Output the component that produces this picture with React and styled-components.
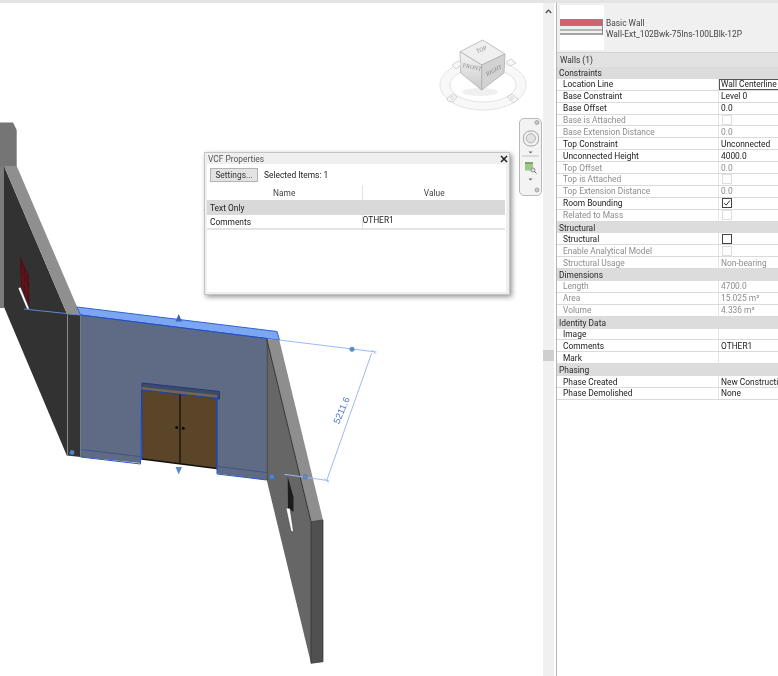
import React from "react";
import styled, { createGlobalStyle } from "styled-components";

const Global = createGlobalStyle`
  html, body { margin: 0; padding: 0; background: #fff; }
  #root { width: 778px; height: 676px; overflow: hidden; }
  * { box-sizing: border-box; }
`;

const Page = styled.div`
  width: 778px; height: 676px; display: flex; flex-direction: column; overflow: hidden;
  font-family: Roboto, "Noto Sans", "Liberation Sans", sans-serif; font-size: 8.4px; color: #222;
  filter: blur(0.3px);
`;
const TopStrip = styled.div`height: 3px; background: #e4e4e4; flex: none;`;
const Body = styled.div`flex: 1; display: flex; min-height: 0;`;
const Viewport = styled.div`position: relative; width: 543px; flex: none; background: #fff;`;
const Scene = styled.svg`display: block; width: 543px; height: 673px;`;

const CubeWrap = styled.svg`position: absolute; left: 435px; top: 32px; width: 100px; height: 85px;`;
const NavBar = styled.div`
  position: absolute; left: 519px; top: 115px; width: 23px; height: 78px;
  border: 1px solid #b9b9b9; border-radius: 5px; background: #f3f3f3;
`;
const NavIcons = styled.svg`display: block; width: 21px; height: 76px;`;

const Dialog = styled.div`
  position: absolute; left: 204px; top: 149px; width: 306px; height: 143px;
  background: #efefef; border: 1px solid #c4c4c4; box-shadow: 2px 2px 5px rgba(0,0,0,.42);
  padding: 0 3px 2px 2px; display: flex; flex-direction: column;
`;
const DialogTitle = styled.div`
  height: 11px; flex: none; display: flex; align-items: center; justify-content: space-between;
  padding: 0 0 0 1px; color: #555;
`;
const CloseGlyph = styled.svg`width: 8px; height: 8px; margin-right: -2px; display: block;`;
const DialogBody = styled.div`flex: 1; background: #fff; display: flex; flex-direction: column;`;
const DialogBar = styled.div`height: 21px; flex: none; display: flex; align-items: center; padding: 0 0 0 3px; gap: 6px;`;
const SettingsButton = styled.button`
  width: 48px; height: 14px; padding: 0; margin: 0; border: 1px solid #b4b4b4; background: #e3e3e3;
  font: inherit; color: #333; display: flex; align-items: center; justify-content: center;
`;
const DialogHead = styled.div`
  height: 15px; flex: none; display: grid; grid-template-columns: 154.5px 1fr; align-items: center; text-align: center; color: #444;
`;
const HeadCell = styled.div`height: 100%; display: flex; align-items: center; justify-content: center; & + & { border-left: 1px solid #e2e2e2; }`;
const DialogGroup = styled.div`height: 15px; flex: none; background: #d9d9d9; margin-right: 1px; display: flex; align-items: center; padding-left: 3px;`;
const DialogRow = styled.div`
  height: 15px; flex: none; display: grid; grid-template-columns: 154.5px 1fr; margin-right: 1px;
  border-bottom: 2px solid #e4e4e4;
`;
const DialogCell = styled.div`
  display: flex; padding: ${p => (p.$value ? "0" : "2px 0 0 3px")}; align-items: ${p => (p.$value ? "flex-start" : "center")};
  line-height: 11px; ${p => p.$value && "border-left: 1px solid #e2e2e2;"}
`;

const Scrollbar = styled.div`width: 11px; flex: none; background: #f0f0f0; display: flex; flex-direction: column; align-items: center;`;
const ScrollUp = styled.svg`width: 7px; height: 5px; margin-top: 6px; flex: none; display: block;`;
const ScrollThumb = styled.div`width: 11px; height: 11px; margin-top: 336px; background: #cfcfcf; flex: none;`;
const Gutter = styled.div`width: 2px; flex: none; background: #fff;`;

const Panel = styled.div`flex: 1; min-width: 0; border-left: 1px solid #b5b5b5; background: #fff; overflow: hidden;`;
const TypeBox = styled.div`height: 49px; background: #f0f0f0; display: flex; align-items: center; padding: 0 0 0 3px; gap: 2px;`;
const TypeSwatch = styled.svg`width: 44px; height: 45px; display: block; flex: none;`;
const TypeText = styled.div`line-height: 11.5px; color: #444; white-space: nowrap; margin-top: 3px;`;
const CountBar = styled.div`height: 15px; background: #e2e2e2; border-top: 1px solid #d2d2d2; display: flex; align-items: center; padding: 0 0 1px 3px; color: #333;`;
const GroupHeader = styled.div`height: 11.9px; background: #dcdcdc; display: flex; align-items: center; padding-left: 2px; color: #2a2a2a; white-space: nowrap;`;
const Row = styled.div`
  height: 11.9px; display: grid; grid-template-columns: 162px 1fr; border-bottom: 1px solid #dadada;
  color: ${p => (p.$off ? "#8d8d8d" : "#222")}; white-space: nowrap;
`;
const Label = styled.div`padding-left: 6px; display: flex; align-items: center; border-right: 1px solid #e6e6e6; overflow: hidden;`;
const Value = styled.div`
  padding-left: 2px; display: flex; align-items: center; overflow: hidden;
  ${p => p.$focus && "border: 1px solid #555; border-right: 0; padding-left: 1px;"}
`;
const Check = styled.svg`width: 10px; height: 10px; display: block; margin-left: 1px;`;

const CheckBox = ({ off, checked }) => (
  <Check viewBox="0 0 10 10">
    <rect x=".5" y=".5" width="9" height="9" fill="#fff" stroke={off ? "#dedede" : "#444"} />
    {checked && <path d="M2.2 5 L4.2 7.2 L7.8 2.6" fill="none" stroke="#333" strokeWidth="1" />}
  </Check>
);

const props = [
  { g: "Constraints" },
  { l: "Location Line", v: "Wall Centerline", focus: true },
  { l: "Base Constraint", v: "Level 0" },
  { l: "Base Offset", v: "0.0" },
  { l: "Base is Attached", box: true, off: true },
  { l: "Base Extension Distance", v: "0.0", off: true },
  { l: "Top Constraint", v: "Unconnected" },
  { l: "Unconnected Height", v: "4000.0" },
  { l: "Top Offset", v: "0.0", off: true },
  { l: "Top is Attached", box: true, off: true },
  { l: "Top Extension Distance", v: "0.0", off: true },
  { l: "Room Bounding", box: true, checked: true },
  { l: "Related to Mass", box: true, off: true },
  { g: "Structural" },
  { l: "Structural", box: true },
  { l: "Enable Analytical Model", box: true, off: true },
  { l: "Structural Usage", v: "Non-bearing", off: true },
  { g: "Dimensions" },
  { l: "Length", v: "4700.0", off: true },
  { l: "Area", v: "15.025 m²", off: true },
  { l: "Volume", v: "4.336 m³", off: true },
  { g: "Identity Data" },
  { l: "Image", v: "" },
  { l: "Comments", v: "OTHER1" },
  { l: "Mark", v: "" },
  { g: "Phasing" },
  { l: "Phase Created", v: "New Construction" },
  { l: "Phase Demolished", v: "None" },
];

const Model = () => (
  <Scene viewBox="0 3 543 673">
    {/* far stub */}
    <polygon points="0,122.5 13,122.5 16.7,130 16.7,168 0,168" fill="#757575" />
    <polygon points="0,167 4,166 4,308 0,308" fill="#7c7c7c" />
    {/* left wall */}
    <polygon points="4,166 67,314 67,456 4,307" fill="#323232" />
    <polygon points="4,166 16.7,166 80.6,315 67,314" fill="#8f8f8f" />
    <polygon points="67,314 80.6,315 80.6,457 67,455.5" fill="#343434" />
    <line x1="67.5" y1="314" x2="67.5" y2="456" stroke="#8a8a8a" />
    {/* left wall window */}
    <polygon points="20,256 29,276 29.5,307 20.7,286" fill="#521016" />
    <path d="M23 266 L23 293 M26 272 L26 300 M21 276 L29 292" stroke="#6e1d24" strokeWidth=".6" fill="none" />
    <polygon points="18,288 20.6,287 29.5,309 26.8,309" fill="#fff" stroke="#111" strokeWidth=".5" />
    <line x1="24" y1="309" x2="80" y2="315" stroke="#5f86dc" strokeWidth="1" />
    {/* selected wall */}
    <polygon points="80.6,315 266.7,338 266.7,480 217,473.5 217,398 142,390 140.5,463 80.6,457" fill="#5f6b85" />
    <polygon points="77,307 277,331.5 279.5,340 266.7,338.5 80.6,315" fill="#7da6f2" stroke="#2f62d6" strokeWidth="1" />
    <line x1="80.6" y1="315" x2="267" y2="338.5" stroke="#2450c0" strokeWidth="1" />
    <polyline points="80.6,457 140.5,464 141.5,390" fill="none" stroke="#2a58c8" strokeWidth="1" />
    <polyline points="217,398 217,474 266.7,480" fill="none" stroke="#2a58c8" strokeWidth="1" />
    <line x1="81" y1="449.5" x2="140" y2="456.5" stroke="#3c5590" strokeWidth="1" />
    <line x1="218" y1="466.5" x2="266.7" y2="472.5" stroke="#3c5590" strokeWidth="1" />
    {/* door */}
    <polygon points="142,383 219.5,391.5 219.5,399 142,391" fill="#3f4a66" stroke="#1c3a80" strokeWidth="1" />
    <polygon points="142,387 217,395 217,398 142,390" fill="#6f6656" />
    <polygon points="142,390.5 216.7,398.5 216.7,468.5 141.7,459" fill="#5a4528" />
    <line x1="141.8" y1="459" x2="217" y2="468.5" stroke="#111" strokeWidth="1.4" />
    <line x1="142" y1="390" x2="217" y2="398.5" stroke="#1d42a8" strokeWidth="1.2" />
    <line x1="141.8" y1="390" x2="141.8" y2="460" stroke="#1d42a8" strokeWidth="1.3" />
    <line x1="216.8" y1="398" x2="216.8" y2="469" stroke="#1d42a8" strokeWidth="1.3" />
    <line x1="180" y1="394.5" x2="180" y2="464" stroke="#0c0c0c" strokeWidth="1.2" />
    <circle cx="176.7" cy="427.5" r="1.5" fill="#0c0c0c" />
    <circle cx="183.2" cy="428.3" r="1.5" fill="#0c0c0c" />
    {/* flip arrows */}
    <polygon points="178.7,314 175.5,321.5 182,321.5" fill="#3a60b8" />
    <polygon points="175.5,467 182,467 178.7,474.5" fill="#5f86dc" />
    {/* right wall */}
    <polygon points="266.7,339 311,521.7 311,663.3 266.7,480" fill="#666" />
    <polygon points="266.7,339 279.3,340 323,520 311,521.7" fill="#8e8e8e" />
    <line x1="266.7" y1="339" x2="311" y2="521.7" stroke="#333" strokeWidth="1" />
    <line x1="267" y1="339" x2="267" y2="480" stroke="#3b3b3b" strokeWidth="1" />
    <polygon points="311,521.7 323,520 323,661.7 311,663.3" fill="#505050" stroke="#2e2e2e" strokeWidth=".7" />
    {/* right wall opening */}
    <polygon points="287.7,476.7 293.5,497 293.5,512 288,508" fill="#1c1c1c" />
    <polygon points="286,508 290,508.5 293.5,532 291,531" fill="#fff" stroke="#222" strokeWidth=".4" />
    {/* dimension */}
    <g stroke="#9dbbf5" strokeWidth="1" fill="none">
      <line x1="279.3" y1="340" x2="376.5" y2="352" />
      <line x1="371.7" y1="353" x2="326.7" y2="480.5" />
      <line x1="284.3" y1="474.3" x2="329" y2="480.7" />
      <path d="M372 350 L375.5 354 M324.5 478.5 L328.5 482.5" />
    </g>
    <circle cx="352" cy="349.3" r="2.2" fill="#5c8fc6" stroke="#4a6ea0" strokeWidth=".5" />
    <circle cx="305.3" cy="476.7" r="2.2" fill="#5c8fc6" stroke="#4a6ea0" strokeWidth=".5" />
    <circle cx="272" cy="476.7" r="2.8" fill="#4d83c8" stroke="#3b5f95" strokeWidth=".5" />
    <circle cx="72" cy="452.5" r="2.4" fill="#4d83c8" />
    <text transform="translate(339 424.5) rotate(-67)" fontFamily="Liberation Sans, sans-serif" fontSize="9.4" fill="#4a72d2">5211.6</text>
  </Scene>
);

const ViewCube = () => (
  <CubeWrap viewBox="435 35 100 85">
    <defs>
      <linearGradient id="face" x1="0" y1="0" x2="0" y2="1">
        <stop offset="0" stopColor="#f4f4f4" />
        <stop offset="1" stopColor="#cbcbcb" />
      </linearGradient>
    </defs>
    <path fillRule="evenodd" d="M440 85 a43 25 0 1 0 86 0 a43 25 0 1 0 -86 0 Z M450 85 a33 17 0 1 0 66 0 a33 17 0 1 0 -66 0 Z" fill="#f8f8f8" stroke="#d2d2d2" strokeWidth=".8" strokeDasharray="2 .6" />
    <ellipse cx="480" cy="92" rx="18" ry="4" fill="#f0f0f0" />
    <polygon points="482.7,40 505,54 481.7,65 460,51.7" fill="#efefef" stroke="#a9a9a9" strokeWidth=".7" />
    <polygon points="460,51.7 481.7,65 481.7,90 460.7,73" fill="url(#face)" stroke="#a9a9a9" strokeWidth=".7" />
    <polygon points="505,54 481.7,65 481.7,90 504,73" fill="#d2d2d2" stroke="#a9a9a9" strokeWidth=".7" />
    <g fontFamily="Liberation Serif, serif" fontSize="5.8" fill="#858585" fontStyle="italic">
      <text transform="translate(477 53) rotate(-20)">TOP</text>
      <text transform="translate(462.5 67) rotate(12)" fontStyle="normal">FRONT</text>
      <text transform="translate(487 76) rotate(-27)">RIGHT</text>
    </g>
    <g fill="#f7f7f7" stroke="#c4c4c4" strokeWidth=".7">
      <path d="M452 65 l6 -4 l4 3 l-6 5 Z" />
      <path d="M506 62 l5 -3 l5 4 l-6 3 Z" />
      <path d="M447 98 l6 -4 l4 3 l-4 5 l-5 -1 Z" />
      <path d="M507 97 l5 -3 l6 5 l-4 4 Z" />
    </g>
    <g stroke="#c8c8c8" strokeWidth=".6" fill="none">
      <circle cx="452" cy="98" r="1.5" />
      <circle cx="512" cy="98" r="1.5" />
    </g>
  </CubeWrap>
);

const NavigationBar = () => (
  <NavBar>
    <NavIcons viewBox="520 119 21 76">
      <circle cx="537" cy="122.5" r="2" fill="#c9c9c9" stroke="#8f8f8f" strokeWidth=".7" />
      <circle cx="537" cy="190" r="2" fill="#c9c9c9" stroke="#8f8f8f" strokeWidth=".7" />
      <rect x="523.5" y="131" width="15" height="15" rx="6.5" fill="#f2f2f2" stroke="#a2a2a2" />
      <circle cx="530.8" cy="138.3" r="4.6" fill="#e2e2e2" stroke="#b0b0b0" />
      <polygon points="528.5,151.5 532.5,151.5 530.5,153.5" fill="#666" />
      <line x1="522" y1="156" x2="539" y2="156" stroke="#c4c4c4" />
      <rect x="525" y="162" width="8" height="8.5" fill="#9fc78a" />
      <rect x="525" y="162" width="8" height="2" fill="#7aa866" />
      <circle cx="533" cy="170" r="2" fill="#dfe7ee" stroke="#777" strokeWidth=".8" />
      <line x1="534.5" y1="171.5" x2="536.5" y2="173.5" stroke="#666" strokeWidth="1" />
      <polygon points="528.5,178.5 532.5,178.5 530.5,180.5" fill="#666" />
    </NavIcons>
  </NavBar>
);

export default function App() {
  return (
    <>
      <Global />
      <Page>
        <TopStrip />
        <Body>
          <Viewport>
            <Model />
            <ViewCube />
            <NavigationBar />
            <Dialog>
              <DialogTitle>
                VCF Properties
                <CloseGlyph viewBox="0 0 8 8">
                  <path d="M1 1 L7 7 M7 1 L1 7" stroke="#222" strokeWidth="1.5" />
                </CloseGlyph>
              </DialogTitle>
              <DialogBody>
                <DialogBar>
                  <SettingsButton>Settings...</SettingsButton>
                  <span>Selected Items: 1</span>
                </DialogBar>
                <DialogHead>
                  <HeadCell>Name</HeadCell>
                  <HeadCell>Value</HeadCell>
                </DialogHead>
                <DialogGroup>Text Only</DialogGroup>
                <DialogRow>
                  <DialogCell>Comments</DialogCell>
                  <DialogCell $value>OTHER1</DialogCell>
                </DialogRow>
              </DialogBody>
            </Dialog>
          </Viewport>
          <Scrollbar>
            <ScrollUp viewBox="0 0 7 5">
              <path d="M.8 4 L3.5 1.2 L6.2 4" fill="none" stroke="#444" strokeWidth="1.2" />
            </ScrollUp>
            <ScrollThumb />
          </Scrollbar>
          <Gutter />
          <Panel>
            <TypeBox>
              <TypeSwatch viewBox="0 0 44 45">
                <rect width="44" height="45" fill="#fff" />
                <rect x="0" y="15" width="43" height="5" fill="#d0626c" />
                <rect x="0" y="14" width="43" height="1" fill="#888" />
                <rect x="0" y="20" width="43" height="1" fill="#888" />
                <rect x="0" y="21" width="43" height="3" fill="#eee" />
                <rect x="0" y="24" width="43" height="2" fill="#b5b5b5" />
                <rect x="0" y="26" width="43" height="2" fill="#f2f2f2" />
                <rect x="0" y="28" width="43" height="2" fill="#a4a4a4" />
                <rect x="42" y="14" width="1" height="16" fill="#888" />
              </TypeSwatch>
              <TypeText>
                Basic Wall
                <br />
                Wall-Ext_102Bwk-75Ins-100LBlk-12P
              </TypeText>
            </TypeBox>
            <CountBar>Walls (1)</CountBar>
            {props.map((p, i) =>
              p.g ? (
                <GroupHeader key={i}>{p.g}</GroupHeader>
              ) : (
                <Row key={i} $off={p.off}>
                  <Label>{p.l}</Label>
                  <Value $focus={p.focus}>
                    {p.box ? <CheckBox off={p.off} checked={p.checked} /> : p.v}
                  </Value>
                </Row>
              )
            )}
          </Panel>
        </Body>
      </Page>
    </>
  );
}
